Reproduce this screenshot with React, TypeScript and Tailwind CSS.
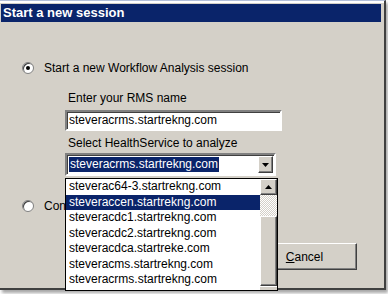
import React from 'react'

const items = [
  'steverac64-3.startrekng.com',
  'steveraccen.startrekng.com',
  'steveracdc1.startrekng.com',
  'steveracdc2.startrekng.com',
  'steveracdca.startreke.com',
  'steveracms.startrekng.com',
  'steveracrms.startrekng.com',
]

function Radio({ checked }: { checked?: boolean }) {
  return (
    <div className="w-[12px] h-[12px] shrink-0 rounded-full bg-white border border-[#808080] shadow-[inset_1px_1px_0_#404040] flex items-center justify-center">
      {checked && <div className="w-[4px] h-[4px] rounded-full bg-black" />}
    </div>
  )
}

function Arrow({ up }: { up?: boolean }) {
  return (
    <svg width="7" height="4" viewBox="0 0 7 4">
      {up ? <path d="M3.5 0 L7 4 L0 4 Z" fill="#000" /> : <path d="M0 0 L7 0 L3.5 4 Z" fill="#000" />}
    </svg>
  )
}

export default function App() {
  return (
    <div className="w-[388px] h-[294px] bg-white overflow-hidden font-['Liberation_Sans',Arial,sans-serif] text-[12px] text-black">
      <div className="relative w-[386px] h-[290px] bg-[#d4d0c8] border-t border-t-[#b4c0da] border-r-2 border-b-2 border-[#404040] shadow-[2px_3px_3px_rgba(0,0,0,0.35)]">
        <div className="h-[3px] border-t-2 border-white" />
        <div className="ml-[1px] w-[380px] h-[18px] bg-[#0a246a] text-white font-bold text-[13px] leading-[18px] pl-[2px]">
          Start a new session
        </div>

        <div className="pl-[22px]">
          <div className="mt-[39px] h-[14px] flex items-center gap-[10px]">
            <Radio checked />
            <span className="leading-[14px]">Start a new Workflow Analysis session</span>
          </div>

          <div className="ml-[43px]">
            <div className="mt-[16px] h-[14px] leading-[14px] pl-[3px]">Enter your RMS name</div>
            <div className="mt-[5px] w-[217px] h-[21px] bg-white border-2 border-t-[#808080] border-l-[#808080] border-r-white border-b-white shadow-[inset_1px_1px_0_#404040] pl-[2px] leading-[17px]">
              steveracrms.startrekng.com
            </div>
            <div className="mt-[5px] h-[14px] leading-[14px] pl-[3px]">Select HealthService to analyze</div>
            <div className="mt-[3px] w-[211px] h-[23px] bg-white border-2 border-t-[#808080] border-l-[#808080] border-r-white border-b-white shadow-[inset_1px_1px_0_#404040] flex items-center pl-[1px] pr-[1px]">
              <span className="bg-[#0a246a] text-white h-[15px] leading-[15px] px-[1px] ml-[1px]">steveracrms.startrekng.com</span>
              <div className="ml-auto w-[15px] h-[17px] bg-[#d4d0c8] border border-t-white border-l-white border-r-[#404040] border-b-[#404040] shadow-[inset_-1px_-1px_0_#808080] flex items-center justify-center">
                <Arrow />
              </div>
            </div>
          </div>

          <div className="mt-[23px] h-[14px] flex items-center gap-[10px]">
            <Radio />
            <span className="leading-[14px] w-[21px] overflow-hidden whitespace-nowrap">Continue an existing session</span>
          </div>

          <div className="mt-[30px] ml-[230px] w-[105px] h-[27px] bg-[#d4d0c8] border border-t-white border-l-white border-r-[#404040] border-b-[#404040] shadow-[inset_-1px_-1px_0_#808080] flex items-center justify-center">
            <span>
              <span className="underline">C</span>ancel
            </span>
          </div>
        </div>

        {/* open dropdown list */}
        <div className="absolute left-[65px] top-[177px] w-[213px] h-[113px] bg-white border border-black flex overflow-hidden">
          <div className="flex-1">
            {items.map((t, i) => (
              <div
                key={t}
                className={`h-[15.5px] leading-[15.5px] pl-[3px] ${i === 1 ? 'bg-[#0a246a] text-white' : ''}`}
              >
                {t}
              </div>
            ))}
          </div>
          <div className="w-[17px] flex flex-col">
            <div className="h-[16px] bg-[#d4d0c8] border border-t-white border-l-white border-r-[#404040] border-b-[#404040] shadow-[inset_-1px_-1px_0_#808080] flex items-center justify-center">
              <Arrow up />
            </div>
            <div className="h-[21px] bg-[repeating-conic-gradient(#ffffff_0_25%,#d4d0c8_0_50%)] bg-[length:2px_2px]" />
            <div className="h-[70px] bg-[#d4d0c8] border border-t-white border-l-white border-r-[#404040] border-b-[#404040] shadow-[inset_-1px_-1px_0_#808080]" />
            <div className="flex-1 bg-[#d4d0c8] border-t border-white" />
          </div>
        </div>
      </div>
    </div>
  )
}
